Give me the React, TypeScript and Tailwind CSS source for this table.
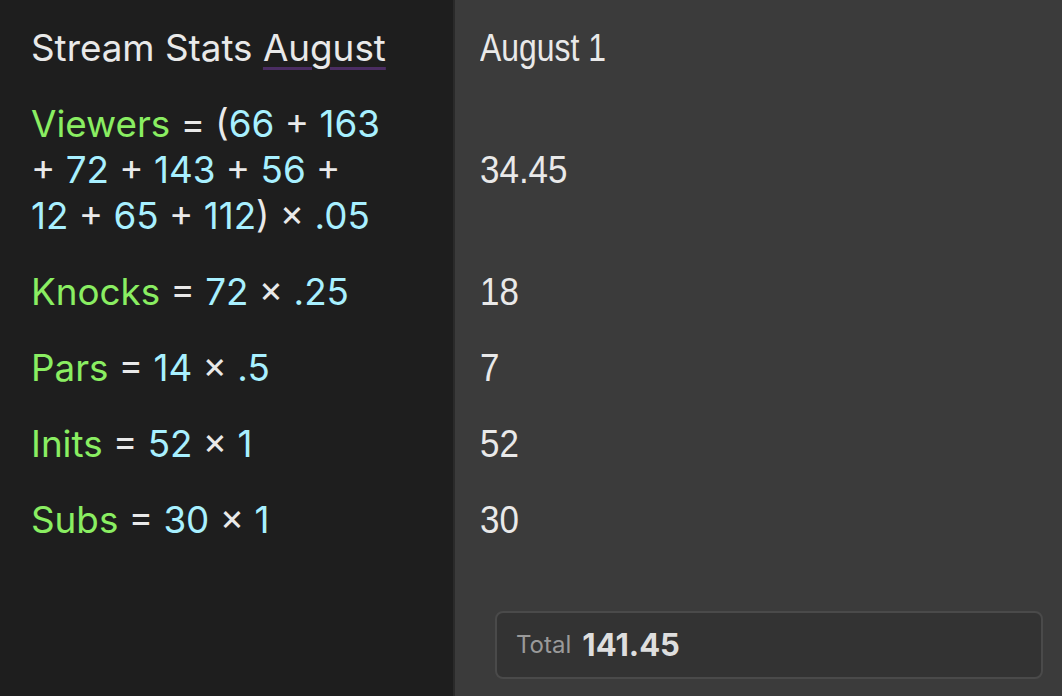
type Token = [kind: "op" | "num", text: string];

const rows: { id: string; label: string; lines: Token[][]; value: string }[] = [
  {
    id: "viewers",
    label: "Viewers",
    lines: [
      [["op", "= ("], ["num", "66"], ["op", " + "], ["num", "163"]],
      [["op", "+ "], ["num", "72"], ["op", " + "], ["num", "143"], ["op", " + "], ["num", "56"], ["op", " +"]],
      [["num", "12"], ["op", " + "], ["num", "65"], ["op", " + "], ["num", "112"], ["op", ") × "], ["num", ".05"]],
    ],
    value: "34.45",
  },
  { id: "knocks", label: "Knocks", lines: [[["op", "= "], ["num", "72"], ["op", " × "], ["num", ".25"]]], value: "18" },
  { id: "pars", label: "Pars", lines: [[["op", "= "], ["num", "14"], ["op", " × "], ["num", ".5"]]], value: "7" },
  { id: "inits", label: "Inits", lines: [[["op", "= "], ["num", "52"], ["op", " × "], ["num", "1"]]], value: "52" },
  { id: "subs", label: "Subs", lines: [[["op", "= "], ["num", "30"], ["op", " × "], ["num", "1"]]], value: "30" },
];

const rowHeight = (lines: number) => lines * 46 + 30;

const App = () => {
  return (
    <div className="flex h-[696px] w-[1062px] overflow-hidden bg-[#1e1e1e]">
      {/* editor column */}
      <div className="w-[453px] shrink-0 bg-[#1e1e1e] pl-[31px] pt-[10px] font-['Inter',sans-serif] text-[36.8px] leading-[46px] text-[#e9e9e9]">
        <div className="flex h-[76px] items-center">
          <span>
            Stream Stats{" "}
            <span className="underline decoration-[#4b2d63] decoration-[2.5px] underline-offset-[6px]">August</span>
          </span>
        </div>
        {rows.map((row) => (
          <div
            key={row.id}
            className="flex flex-col justify-center whitespace-pre"
            style={{ height: rowHeight(row.lines.length) }}
          >
            {row.lines.map((line, li) => (
              <div key={li}>
                {li === 0 && <span className="text-[#8aee62]">{row.label} </span>}
                {line.map(([kind, text], i) => (
                  <span key={i} className={kind === "num" ? "text-[#a8f0ff]" : "text-[#e9e9e9]"}>
                    {text}
                  </span>
                ))}
              </div>
            ))}
          </div>
        ))}
      </div>

      <div className="w-[2px] shrink-0 bg-[#2a2a2a]" />

      {/* results column */}
      <div className="flex flex-1 flex-col bg-[#3b3b3b] pt-[10px]">
        <div className="pl-[25px] font-['Liberation_Sans',Arial,sans-serif] text-[38px] leading-[46px] text-[#e9e9e9]">
          <div className="flex h-[76px] items-center">
            <span className="inline-block origin-left scale-x-[0.84]">August 1</span>
          </div>
          {rows.map((row) => (
            <div
              key={row.id}
              className="flex items-center"
              style={{ height: rowHeight(row.lines.length) }}
            >
              <span className="inline-block origin-left scale-x-[0.92]">{row.value}</span>
            </div>
          ))}
        </div>

        <div className="mb-[17px] ml-[40px] mr-[19px] mt-auto flex h-[68px] items-center gap-[11px] rounded-[8px] border-2 border-[#4a4a4a] bg-[#333333] px-[19px] font-['Inter',sans-serif]">
          <span className="text-[24px] text-[#9a9a9a]">Total</span>
          <span className="text-[31px] font-bold text-[#dedede]">141.45</span>
        </div>
      </div>
    </div>
  );
};

export default App;
